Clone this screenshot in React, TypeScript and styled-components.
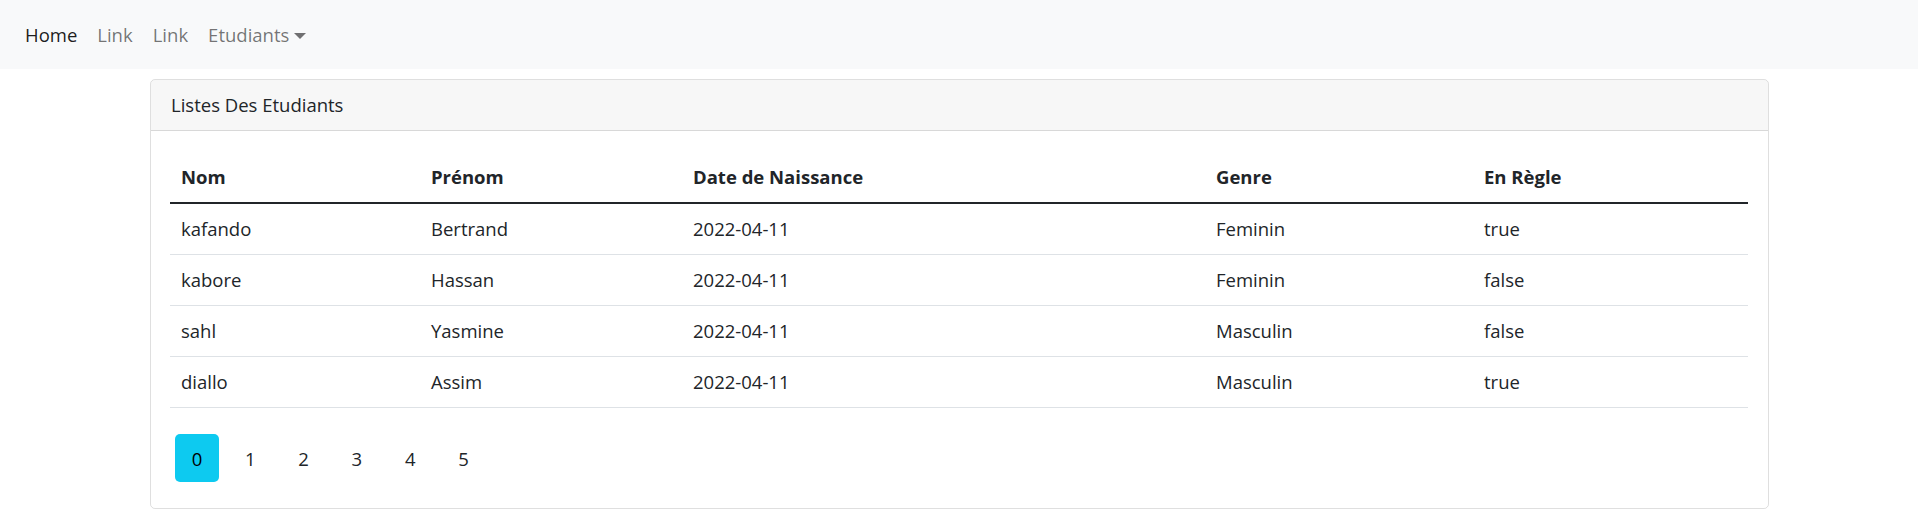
import React from "react";
import styled, { createGlobalStyle } from "styled-components";

const GlobalStyle = createGlobalStyle`
  html, body {
    margin: 0;
    padding: 0;
    background: #ffffff;
  }
  body {
    font-family: "Open Sans", "Noto Sans", Arial, sans-serif;
    font-size: 18.5px;
    color: #212529;
  }
  * { box-sizing: border-box; }
`;

const NavBar = styled.nav`
  height: 69px;
  background: #f8f9fa;
  display: flex;
  align-items: center;
  padding: 0 15px;
`;

const NavList = styled.ul`
  display: flex;
  align-items: center;
  list-style: none;
  margin: 0;
  padding: 0;
`;

const NavLink = styled.a<{ $active?: boolean }>`
  display: flex;
  align-items: center;
  padding: 0 10px;
  line-height: 30px;
  text-decoration: none;
  color: ${(p) => (p.$active ? "rgba(0,0,0,0.9)" : "rgba(0,0,0,0.55)")};
  cursor: pointer;
`;

const Caret = styled.span`
  display: inline-block;
  margin-left: 5px;
  margin-top: 2px;
  width: 0;
  height: 0;
  border-top: 6px solid rgba(0, 0, 0, 0.55);
  border-left: 6px solid transparent;
  border-right: 6px solid transparent;
`;

const Card = styled.section`
  width: 1619px;
  margin: 10px 0 0 150px;
  border: 1px solid rgba(0, 0, 0, 0.125);
  border-radius: 5px;
  overflow: hidden;
`;

const CardHeader = styled.header`
  padding: 10px 20px;
  line-height: 30px;
  background: rgba(0, 0, 0, 0.03);
  border-bottom: 1px solid rgba(0, 0, 0, 0.125);
`;

const CardBody = styled.div`
  padding: 20px 20px 26px 19px;
`;

const Table = styled.table`
  width: 100%;
  border-collapse: collapse;
  table-layout: fixed;
`;

const HeadCell = styled.th<{ $w: number }>`
  width: ${(p) => p.$w}px;
  text-align: left;
  font-weight: 700;
  padding: 10px 10px 10px 11px;
  line-height: 31px;
  border-bottom: 2px solid #212529;
`;

const Row = styled.tr`
  border-bottom: 1px solid #dee2e6;
`;

const Cell = styled.td`
  padding: 10px 10px 10px 11px;
  line-height: 30px;
  font-weight: 400;
`;

const Pagination = styled.div`
  display: flex;
  gap: 9.3px;
  margin: 26px 0 0 5px;
`;

const PageButton = styled.button<{ $active?: boolean }>`
  width: 44px;
  height: 48px;
  border: none;
  border-radius: 5px;
  padding: 0;
  font-family: inherit;
  font-size: 18.5px;
  color: ${(p) => (p.$active ? "#000000" : "#212529")};
  background: ${(p) => (p.$active ? "#0dcaf0" : "transparent")};
  cursor: pointer;
`;

const columns = [
  { label: "Nom", w: 250 },
  { label: "Prénom", w: 262 },
  { label: "Date de Naissance", w: 523 },
  { label: "Genre", w: 268 },
  { label: "En Règle", w: 275 },
];

const students = [
  ["kafando", "Bertrand", "2022-04-11", "Feminin", "true"],
  ["kabore", "Hassan", "2022-04-11", "Feminin", "false"],
  ["sahl", "Yasmine", "2022-04-11", "Masculin", "false"],
  ["diallo", "Assim", "2022-04-11", "Masculin", "true"],
];

export default function App() {
  return (
    <>
      <GlobalStyle />
      <NavBar>
        <NavList>
          <li><NavLink $active>Home</NavLink></li>
          <li><NavLink>Link</NavLink></li>
          <li><NavLink>Link</NavLink></li>
          <li>
            <NavLink>
              Etudiants
              <Caret />
            </NavLink>
          </li>
        </NavList>
      </NavBar>
      <Card>
        <CardHeader>Listes Des Etudiants</CardHeader>
        <CardBody>
          <Table>
            <thead>
              <tr>
                {columns.map((c) => (
                  <HeadCell key={c.label} $w={c.w}>
                    {c.label}
                  </HeadCell>
                ))}
              </tr>
            </thead>
            <tbody>
              {students.map((s, i) => (
                <Row key={i}>
                  {s.map((v, j) => (
                    <Cell key={j}>{v}</Cell>
                  ))}
                </Row>
              ))}
            </tbody>
          </Table>
          <Pagination>
            {[0, 1, 2, 3, 4, 5].map((n) => (
              <PageButton key={n} $active={n === 0}>
                {n}
              </PageButton>
            ))}
          </Pagination>
        </CardBody>
      </Card>
    </>
  );
}
